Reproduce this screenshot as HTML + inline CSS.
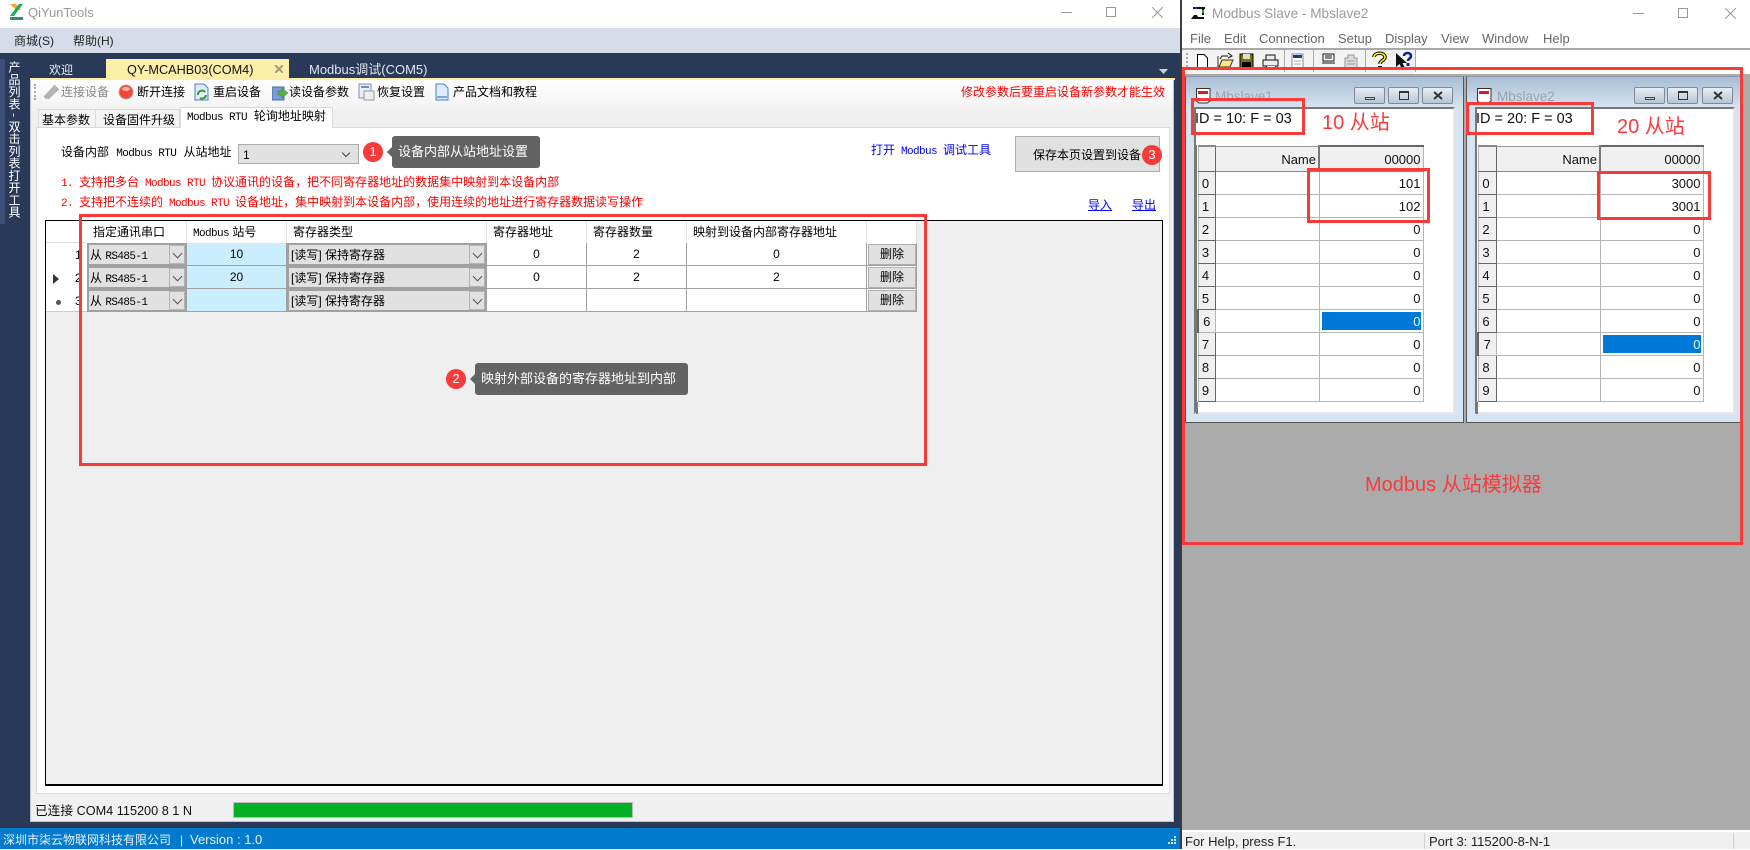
<!DOCTYPE html>
<html><head><meta charset="utf-8"><title>QiYunTools</title>
<style>
html,body{margin:0;padding:0;background:#fff}
body{width:1750px;height:849px;position:relative;overflow:hidden;font-family:"Liberation Sans","Noto Sans CJK SC",sans-serif;font-size:12px;color:#000}
div,span,svg{box-sizing:border-box}
.a{position:absolute}
.t{position:absolute;white-space:nowrap;line-height:16px;font-size:12px}
.s{font-family:"Liberation Mono","WenQuanYi Zen Hei","Noto Sans CJK SC",monospace;word-spacing:-1.2px}
.m{font-family:"Liberation Mono",monospace;font-size:11px;letter-spacing:-.6px;word-spacing:0}
.c{font-family:"Noto Sans CJK SC",sans-serif}
.r{color:#f00}.b{color:#00f}
.red{position:absolute;border:3px solid #f93a3a}
.circ{position:absolute;width:20px;height:20px;border-radius:50%;background:#f93a3a;color:#fff;text-align:center;line-height:20px;font-size:13px}
.tip{position:absolute;background:#636363;color:#fff;border-radius:3px;font-size:13px;white-space:nowrap;font-family:"Liberation Sans","Noto Sans CJK SC",sans-serif}
.tip:before{content:"";position:absolute;left:-5px;top:50%;margin-top:-5px;border:5px solid transparent;border-left:0;border-right-color:#636363}
.chev{position:absolute;background:#e1e1e1;border:1px solid #b4b4b4}
.chev:after{content:"";position:absolute;left:50%;top:50%;width:6px;height:6px;margin:-5px 0 0 -3px;border-right:1px solid #555;border-bottom:1px solid #555;transform:rotate(45deg)}
.hc{position:absolute;top:221px;height:22px;border-right:1px solid #e4e4e4;line-height:22px;padding-left:6px;white-space:nowrap;background:#fff}
.combo{position:absolute;height:23px;background:#e1e1e1;border:1px solid #a0a0a0;outline:1px solid #a0a0a0;outline-offset:-2px;line-height:22px;padding-top:0;white-space:nowrap}
.cell{position:absolute;height:23px;background:#fff;border-right:1px solid #a0a0a0;border-bottom:1px solid #a0a0a0;text-align:center;line-height:23px}
.del{position:absolute;left:868px;width:48px;height:21px;background:#e1e1e1;border:1px solid #b0b0b0;text-align:center;line-height:19px}
.child{position:absolute;top:76px;height:347px;background:#d6e4f1;border:1px solid #555;border-top-color:#8a98a8}
.ctb{position:absolute;left:0;right:0;top:0;height:30px;background:linear-gradient(#a9bdd3,#d6e4f1)}
.cbtn{position:absolute;top:10px;width:31px;height:17px;border:1px solid #7f8b99;border-radius:2px;background:linear-gradient(#e6edf4,#b9c6d4)}
.client{position:absolute;background:#fff;border:2px solid #777;border-right-color:#e6e6e6;border-bottom-color:#e6e6e6}
.mg{position:absolute;border-collapse:collapse;table-layout:fixed;font-size:13px;background:#fff;color:#111}
.mg td,.mg th{height:23px;padding:2px 2px 0 0;border:1px solid #b5b5b5;text-align:right;font-weight:normal;box-sizing:border-box;line-height:20px}
.mg th{background:#f0f0f0;text-align:center;border-right:1px solid #666;border-bottom:1px solid #666}
.mg tr.h td{background:#f0f0f0;border-top:2px solid #666;border-bottom:1px solid #888}
.mg tr.h td.n{border-right:2px solid #777;border-top:1px solid #999}
.mg td.sel{background:#0078d7;color:#dff;box-shadow:inset 0 0 0 2px #fff}
.mg th.cur{border-left:2px solid #666;border-right:none;border-bottom:none;border-top:1px solid #666;padding-left:2px}
</style></head>
<body>

<!-- LEFT WINDOW -->
<div class="a" style="left:0;top:0;width:1180px;height:28px;background:#fff"></div>
<svg class="a" style="left:8px;top:3px" width="18" height="18" viewBox="0 0 18 18"><path d="M2 1H8L13 7H8z" fill="#f5a623"/><path d="M11 1H15L6 13H2z" fill="#26a86a"/><path d="M2 14H15V17H2z" fill="#2b8f78"/></svg>
<div class="t" style="left:28px;top:5px;color:#999;font-size:13px">QiYunTools</div>
<div class="a" style="left:1061px;top:12px;width:11px;height:1px;background:#999"></div>
<div class="a" style="left:1106px;top:7px;width:10px;height:10px;border:1px solid #999"></div>
<svg class="a" style="left:1152px;top:7px" width="11" height="11"><path d="M0 0L11 11M11 0L0 11" stroke="#999" fill="none"/></svg>

<div class="a" style="left:0;top:28px;width:1180px;height:25px;background:#d6dce9"></div>
<div class="t" style="left:14px;top:33px;color:#222;font-size:12px">商城(S)</div>
<div class="t" style="left:73px;top:33px;color:#222;font-size:12px">帮助(H)</div>

<div class="a" style="left:0;top:53px;width:1180px;height:775px;background:#293a58"></div>
<div class="a" style="left:0;top:59px;width:5px;height:165px;background:#3e5078"></div>
<div class="a" style="left:6px;top:61px;width:16px;height:160px;color:#fff;font-size:12px;line-height:16px;letter-spacing:.25px;writing-mode:vertical-rl;white-space:nowrap;font-family:'Noto Sans CJK SC',sans-serif">产品列表 - 双击列表打开工具</div>

<!-- tabs -->
<div class="t" style="left:49px;top:62px;color:#e8edf5;font-size:12px">欢迎</div>
<div class="a" style="left:106px;top:59px;width:183px;height:20px;background:#fdeea8"></div>
<div class="t" style="left:127px;top:62px;color:#111;font-size:12.700px">QY-MCAHB03(COM4)</div>
<svg class="a" style="left:275px;top:65px" width="8" height="8"><path d="M0 0L8 8M8 0L0 8" stroke="#a09a7c" stroke-width="2" fill="none"/></svg>
<div class="t" style="left:309px;top:62px;color:#dfe5ef;font-size:13px">Modbus调试(COM5)</div>
<svg class="a" style="left:1159px;top:69px" width="10" height="5"><path d="M0 0H9L4.500 5z" fill="#ccd3df"/></svg>
<div class="a" style="left:30px;top:78px;width:1145px;height:2px;background:#fdeea8"></div>

<!-- main panel -->
<div class="a" style="left:30px;top:80px;width:1144px;height:742px;background:#f0f0f0;border-left:1px solid #bcc3d0;border-right:1px solid #bcc3d0;border-bottom:1px solid #bcc3d0"></div>
<div class="a" style="left:31px;top:80px;width:1142px;height:48px;background:linear-gradient(#fff 0,#f9f9f9 30%,#efefef 75%,#f0f0f0)"></div>
<!-- toolbar -->
<div class="a" style="left:34px;top:84px;width:2px;height:16px;border-left:2px dotted #aaa"></div>
<svg class="a" style="left:42px;top:83px" width="18" height="18"><path d="M3 15L14 3M5 15L16 5" stroke="#b4b4b4" stroke-width="4" fill="none"/></svg>
<div class="t" style="left:61px;top:84px;color:#888">连接设备</div>
<svg class="a" style="left:118px;top:84px" width="16" height="16"><circle cx="8" cy="8" r="7" fill="#f0483a" stroke="#c8a090"/><ellipse cx="8" cy="5" rx="4" ry="2" fill="#ffb0a0"/></svg>
<div class="t" style="left:137px;top:84px">断开连接</div>
<svg class="a" style="left:194px;top:83px" width="17" height="18"><path d="M1 1H10L14 5V17H1z" fill="#dfeafa" stroke="#4a80c0"/><path d="M4 12A4 4 0 0 1 11 9M12 12A4 4 0 0 1 6 15" stroke="#3a9a3a" stroke-width="2" fill="none"/></svg>
<div class="t" style="left:213px;top:84px">重启设备</div>
<svg class="a" style="left:272px;top:85px" width="16" height="16"><rect x="0" y="2" width="12" height="13" fill="#7a9bd8" stroke="#4a6ab0"/><path d="M6 6H10V3L16 8L10 13V10H6z" fill="#5ab04a" stroke="#3a8a3a" stroke-width=".5"/></svg>
<div class="t" style="left:289px;top:84px">读设备参数</div>
<svg class="a" style="left:358px;top:83px" width="17" height="18"><rect x="1" y="1" width="12" height="14" fill="#e8eef8" stroke="#7f90b0"/><rect x="3" y="3" width="8" height="2" fill="#6a8ac8"/><rect x="6" y="8" width="10" height="9" fill="#eee" stroke="#999"/></svg>
<div class="t" style="left:377px;top:84px">恢复设置</div>
<svg class="a" style="left:435px;top:83px" width="14" height="18"><path d="M1 1H9L13 5V17H1z" fill="#dfeafc" stroke="#4a80c0"/><path d="M2 14H12" stroke="#7aa8e0" stroke-width="2"/></svg>
<div class="t" style="left:453px;top:84px">产品文档和教程</div>
<div class="t r" style="left:961px;top:84px">修改参数后要重启设备新参数才能生效</div>

<!-- page tabs -->
<div class="a" style="left:38px;top:109px;width:58px;height:19px;background:#f3f3f3;border:1px solid #d9d9d9;border-bottom:0"></div>
<div class="a" style="left:96px;top:109px;width:84px;height:19px;background:#f3f3f3;border:1px solid #d9d9d9;border-bottom:0;border-left:0"></div>
<div class="t" style="left:42px;top:112px">基本参数</div>
<div class="t" style="left:103px;top:112px">设备固件升级</div>
<div class="a" style="left:36px;top:127px;width:1134px;height:667px;background:#fff;border:1px solid #d9d9d9"></div>
<div class="a" style="left:180px;top:107px;width:153px;height:21px;background:#fff;border:1px solid #d9d9d9;border-bottom:0"></div>
<div class="t s" style="left:187px;top:109px;word-spacing:-.4px"><span class="m">Modbus RTU</span> 轮询地址映射</div>

<div class="t s" style="left:61px;top:145px;word-spacing:0"><span>设备内部</span> <span class="m">Modbus RTU</span> <span>从站地址</span></div>
<div class="a" style="left:238px;top:144px;width:121px;height:20px;background:#e1e1e1;border:1px solid #adadad;line-height:20px;padding-left:4px">1<span class="a" style="right:9px;top:5px;width:6px;height:6px;border-right:1px solid #444;border-bottom:1px solid #444;transform:rotate(45deg)"></span></div>
<div class="circ" style="left:363px;top:142px">1</div>
<div class="tip" style="left:392px;top:136px;width:148px;height:32px;line-height:31px;padding-left:6px">设备内部从站地址设置</div>

<div class="t s r" style="left:61px;top:174px"><span class="m">1.</span> 支持把多台 <span class="m">Modbus RTU</span> 协议通讯的设备<span class="c">&#xFF0C;</span>把不同寄存器地址的数据集中映射到本设备内部</div>
<div class="t s r" style="left:61px;top:194px"><span class="m">2.</span> 支持把不连续的 <span class="m">Modbus RTU</span> 设备地址<span class="c">&#xFF0C;</span>集中映射到本设备内部<span class="c">&#xFF0C;</span>使用连续的地址进行寄存器数据读写操作</div>

<div class="t s b" style="left:871px;top:143px">打开 <span class="m">Modbus</span> 调试工具</div>
<div class="a" style="left:1015px;top:136px;width:145px;height:36px;background:#e1e1e1;border:1px solid #adadad"></div>
<div class="t" style="left:1033px;top:147px">保存本页设置到设备</div>
<div class="circ" style="left:1142px;top:145px">3</div>
<div class="t b" style="left:1088px;top:197px;text-decoration:underline">导入</div>
<div class="t b" style="left:1132px;top:197px;text-decoration:underline">导出</div>

<!-- data grid -->
<div class="a" style="left:45px;top:220px;width:1118px;height:566px;background:#efefef;border:1px solid #000;border-bottom-width:2px"></div>
<div class="a" style="left:46px;top:221px;width:41px;height:91px;background:#fff;border-bottom:1px solid #ccc"></div>
<div class="a" style="left:46px;top:242px;width:41px;height:1px;background:#ddd"></div>
<div class="t" style="left:75px;top:247px">1</div>
<div class="t" style="left:75px;top:270px">2</div>
<div class="t" style="left:75px;top:293px">3</div>
<svg class="a" style="left:53px;top:274px" width="6" height="10"><path d="M0 0L6 5L0 10z" fill="#333"/></svg>
<div class="a" style="left:56px;top:300px;width:5px;height:5px;border-radius:50%;background:#555"></div>

<div class="hc" style="left:87px;width:100px">指定通讯串口</div>
<div class="hc" style="left:187px;width:100px"><span class="m" style="font-size:11px">Modbus</span> 站号</div>
<div class="hc" style="left:287px;width:200px">寄存器类型</div>
<div class="hc" style="left:487px;width:100px">寄存器地址</div>
<div class="hc" style="left:587px;width:100px">寄存器数量</div>
<div class="hc" style="left:687px;width:180px">映射到设备内部寄存器地址</div>
<div class="hc" style="left:867px;width:50px"></div>
<div class="a" style="left:87px;top:243px;width:830px;height:69px;background:#fff;border-right:1px solid #a0a0a0"></div>

<!-- row 1 -->
<div class="combo" style="left:87px;top:243px;width:100px;padding-left:2px">从 <span class="m">RS485-1</span></div><div class="chev" style="left:169px;top:245px;width:16px;height:19px"></div>
<div class="cell" style="left:187px;top:243px;width:100px;background:#cbeeff">10</div>
<div class="combo" style="left:287px;top:243px;width:200px;padding-left:3px">[读写] 保持寄存器</div><div class="chev" style="left:469px;top:245px;width:16px;height:19px"></div>
<div class="cell" style="left:487px;top:243px;width:100px">0</div>
<div class="cell" style="left:587px;top:243px;width:100px">2</div>
<div class="cell" style="left:687px;top:243px;width:180px">0</div>
<div class="a" style="left:867px;top:243px;width:50px;height:23px;border-bottom:1px solid #a0a0a0"></div>
<div class="del" style="top:244px">删除</div>
<!-- row 2 -->
<div class="combo" style="left:87px;top:266px;width:100px;padding-left:2px">从 <span class="m">RS485-1</span></div><div class="chev" style="left:169px;top:268px;width:16px;height:19px"></div>
<div class="cell" style="left:187px;top:266px;width:100px;background:#cbeeff">20</div>
<div class="combo" style="left:287px;top:266px;width:200px;padding-left:3px">[读写] 保持寄存器</div><div class="chev" style="left:469px;top:268px;width:16px;height:19px"></div>
<div class="cell" style="left:487px;top:266px;width:100px">0</div>
<div class="cell" style="left:587px;top:266px;width:100px">2</div>
<div class="cell" style="left:687px;top:266px;width:180px">2</div>
<div class="a" style="left:867px;top:266px;width:50px;height:23px;border-bottom:1px solid #a0a0a0"></div>
<div class="del" style="top:267px">删除</div>
<!-- row 3 -->
<div class="combo" style="left:87px;top:289px;width:100px;padding-left:2px">从 <span class="m">RS485-1</span></div><div class="chev" style="left:169px;top:291px;width:16px;height:19px"></div>
<div class="cell" style="left:187px;top:289px;width:100px;background:#cbeeff"></div>
<div class="combo" style="left:287px;top:289px;width:200px;padding-left:3px">[读写] 保持寄存器</div><div class="chev" style="left:469px;top:291px;width:16px;height:19px"></div>
<div class="cell" style="left:487px;top:289px;width:100px"></div>
<div class="cell" style="left:587px;top:289px;width:100px"></div>
<div class="cell" style="left:687px;top:289px;width:180px"></div>
<div class="a" style="left:867px;top:289px;width:50px;height:23px;border-bottom:1px solid #a0a0a0"></div>
<div class="del" style="top:290px">删除</div>

<div class="red" style="left:79px;top:214px;width:848px;height:252px"></div>
<div class="circ" style="left:446px;top:369px;">2</div>
<div class="tip" style="left:475px;top:363px;width:213px;height:32px;line-height:31px;padding-left:6px">映射外部设备的寄存器地址到内部</div>

<!-- status -->
<div class="t" style="left:35px;top:803px;color:#111;font-size:12.700px">已连接 COM4 115200 8 1 N</div>
<div class="a" style="left:233px;top:802px;width:400px;height:16px;background:#06b025;border:1px solid #bcbcbc"></div>

<!-- blue bar -->
<div class="a" style="left:0;top:828px;width:1180px;height:21px;background:#007acc"></div>
<div class="t" style="left:3px;top:832px;color:#e8f2fb;font-size:12px">深圳市柒云物联网科技有限公司</div>
<div class="t" style="left:180px;top:832px;color:#e8f2fb">|</div>
<div class="t" style="left:190px;top:832px;color:#e8f2fb;font-size:13px">Version : 1.0</div>
<svg class="a" style="left:1166px;top:836px" width="11" height="11"><g fill="#cfe4f5"><rect x="8" y="0" width="2" height="2"/><rect x="5" y="3" width="2" height="2"/><rect x="8" y="3" width="2" height="2"/><rect x="2" y="6" width="2" height="2"/><rect x="5" y="6" width="2" height="2"/><rect x="8" y="6" width="2" height="2"/></g></svg>

<!-- RIGHT WINDOW -->
<div class="a" style="left:1180px;top:0;width:2px;height:849px;background:#3c3c3c"></div>
<div class="a" style="left:1182px;top:0;width:568px;height:849px;background:#ababab"></div>
<div class="a" style="left:1182px;top:0;width:568px;height:49px;background:#fff;border-bottom:1px solid #a8a8a8"></div>
<svg class="a" style="left:1191px;top:5px" width="15" height="15"><path d="M2 3H5M11 3H14M5 3H11M12 3V10M2 13H13" stroke="#111" stroke-width="2" fill="none"/><rect x="4" y="2" width="2" height="2" fill="#1a3ad0"/><rect x="11" y="5" width="2" height="3" fill="#10a030"/><path d="M0 14L3 10H6L8 14z" fill="#111"/></svg>
<div class="t" style="left:1212px;top:6px;color:#9a9a9a;font-size:13.600px">Modbus Slave - Mbslave2</div>
<div class="a" style="left:1633px;top:13px;width:11px;height:1px;background:#999"></div>
<div class="a" style="left:1678px;top:8px;width:10px;height:10px;border:1px solid #999"></div>
<svg class="a" style="left:1725px;top:8px" width="11" height="11"><path d="M0 0L11 11M11 0L0 11" stroke="#999" fill="none"/></svg>

<div class="t" style="left:1190px;top:31px;color:#666;font-size:13px">File</div>
<div class="t" style="left:1224px;top:31px;color:#666;font-size:13px">Edit</div>
<div class="t" style="left:1259px;top:31px;color:#666;font-size:13px">Connection</div>
<div class="t" style="left:1338px;top:31px;color:#666;font-size:13px">Setup</div>
<div class="t" style="left:1385px;top:31px;color:#666;font-size:13px">Display</div>
<div class="t" style="left:1441px;top:31px;color:#666;font-size:13px">View</div>
<div class="t" style="left:1482px;top:31px;color:#666;font-size:13px">Window</div>
<div class="t" style="left:1543px;top:31px;color:#666;font-size:13px">Help</div>

<div class="a" style="left:1182px;top:50px;width:568px;height:24px;background:#fff"></div>
<div class="a" style="left:1182px;top:50px;width:233px;height:24px;background:#f3f3f3"></div>
<div class="a" style="left:1186px;top:53px;width:2px;height:14px;border-left:2px dotted #aaa"></div>
<svg class="a" style="left:1182px;top:50px" width="236" height="22" viewBox="0 0 236 22">
<path d="M15.500 4.500H22L25.500 8V18.500H15.500z" fill="#fff" stroke="#000"/>
<path d="M36 6V17H48L51 10H40L37 17" fill="#ffe680" stroke="#333"/><path d="M38 9L40 6H46M46 3L50 6L46 8" fill="none" stroke="#111"/>
<rect x="58" y="4" width="13" height="14" fill="#807000" stroke="#000"/><rect x="61" y="4" width="7" height="5" fill="#ddd"/><rect x="60" y="12" width="9" height="6" fill="#000"/>
<path d="M84 5H93V10H84zM81 10H96V16H81z" fill="#eee" stroke="#111"/><path d="M85 16L83 19H92L94 16" fill="#fff" stroke="#111"/>
<rect x="102" y="0" width="1" height="22" fill="#aaa"/>
<rect x="110" y="4" width="11" height="15" fill="#fff" stroke="#888"/><rect x="111" y="5" width="9" height="3" fill="#1a3a90"/><path d="M112 11H119M112 14H119" stroke="#aaa"/>
<rect x="131" y="0" width="1" height="22" fill="#aaa"/>
<rect x="141" y="4" width="11" height="7" fill="#fff" stroke="#111"/><path d="M143 6H150M143 8H150M140 13H153" stroke="#111"/>
<path d="M166 5H172V8H175V18H163V8H166z" fill="#ddd" stroke="#999"/><path d="M165 11H173M165 14H173" stroke="#999"/>
<rect x="183" y="0" width="1" height="22" fill="#aaa"/>
<path d="M192 7C192 2 203 2 203 7C203 11 198 10 198 14" fill="none" stroke="#000" stroke-width="3.500"/><path d="M192 7C192 2 203 2 203 7C203 11 198 10 198 14" fill="none" stroke="#ff0" stroke-width="1.500"/><rect x="196" y="16" width="4" height="3" fill="#000"/>
<path d="M214 3V17L217.500 14L220 19L223 18L220.500 13H225z" fill="#111"/>
<path d="M222 6C222 2 229 2 229 6C229 9 226 8 226 11" fill="none" stroke="#102090" stroke-width="2.500"/><rect x="224.500" y="13" width="3" height="3" fill="#102090"/>
<rect x="233" y="0" width="1" height="22" fill="#aaa"/>
</svg>

<!-- child 1 -->
<div class="child" style="left:1185px;width:279px">
  <div class="ctb"></div>
  <svg class="a" style="left:10px;top:11px" width="15" height="17"><path d="M.5 .5H14V13L11 15H3L.5 13z" fill="#fff" stroke="#333"/><rect x="2" y="3" width="10" height="3" fill="#d02020"/></svg>
  <div class="t" style="left:29px;top:12px;color:#9aa3ad;font-size:13.500px">Mbslave1</div>
  <div class="cbtn" style="left:168px"><span class="a" style="left:10px;top:9px;width:10px;height:3px;border:1px solid #444"></span></div>
  <div class="cbtn" style="left:202px"><span class="a" style="left:10px;top:3px;width:10px;height:9px;border:1px solid #333;border-top-width:2px"></span></div>
  <div class="cbtn" style="left:236px"><svg class="a" style="left:10px;top:3px" width="10" height="9"><path d="M1 1L9 8M9 1L1 8" stroke="#333" stroke-width="2"/></svg></div>
  <div class="client" style="left:8px;top:30px;width:261px;height:307px"></div>
  <div class="t" style="left:9px;top:33px;font-size:14.500px;line-height:18px;color:#111">ID = 10: F = 03</div>
  <div class="a" style="left:10px;top:68px;width:2px;height:269px;background:#777"></div>
  <table class="mg" style="left:11px;top:68px;width:225px">
   <colgroup><col style="width:17px"><col style="width:104px"><col style="width:104px"></colgroup>
   <tr class="h"><th style="height:25px;border-top:2px solid #888"></th><td class="n" style="height:25px">Name</td><td style="height:25px">00000</td></tr>
   <tr><th>0</th><td></td><td>101</td></tr><tr><th>1</th><td></td><td>102</td></tr><tr><th>2</th><td></td><td>0</td></tr><tr><th>3</th><td></td><td>0</td></tr><tr><th>4</th><td></td><td>0</td></tr><tr><th>5</th><td></td><td>0</td></tr>
   <tr><th class="cur">6</th><td></td><td class="sel">0</td></tr>
   <tr><th>7</th><td></td><td>0</td></tr><tr><th>8</th><td></td><td>0</td></tr><tr><th>9</th><td></td><td>0</td></tr>
  </table>
</div>
<!-- child 2 -->
<div class="child" style="left:1466px;width:277px">
  <div class="ctb"></div>
  <svg class="a" style="left:10px;top:11px" width="15" height="17"><path d="M.5 .5H14V13L11 15H3L.5 13z" fill="#fff" stroke="#333"/><rect x="2" y="3" width="10" height="3" fill="#d02020"/></svg>
  <div class="t" style="left:30px;top:12px;color:#9aa3ad;font-size:13.500px">Mbslave2</div>
  <div class="cbtn" style="left:167px"><span class="a" style="left:10px;top:9px;width:10px;height:3px;border:1px solid #444"></span></div>
  <div class="cbtn" style="left:200px"><span class="a" style="left:10px;top:3px;width:10px;height:9px;border:1px solid #333;border-top-width:2px"></span></div>
  <div class="cbtn" style="left:235px"><svg class="a" style="left:10px;top:3px" width="10" height="9"><path d="M1 1L9 8M9 1L1 8" stroke="#333" stroke-width="2"/></svg></div>
  <div class="client" style="left:8px;top:30px;width:260px;height:307px"></div>
  <div class="t" style="left:9px;top:33px;font-size:14.500px;line-height:18px;color:#111">ID = 20: F = 03</div>
  <div class="a" style="left:9px;top:68px;width:2px;height:269px;background:#777"></div>
  <table class="mg" style="left:10px;top:68px;width:225px">
   <colgroup><col style="width:18px"><col style="width:104px"><col style="width:103px"></colgroup>
   <tr class="h"><th style="height:25px;border-top:2px solid #888"></th><td class="n" style="height:25px">Name</td><td style="height:25px">00000</td></tr>
   <tr><th>0</th><td></td><td>3000</td></tr><tr><th>1</th><td></td><td>3001</td></tr><tr><th>2</th><td></td><td>0</td></tr><tr><th>3</th><td></td><td>0</td></tr><tr><th>4</th><td></td><td>0</td></tr><tr><th>5</th><td></td><td>0</td></tr><tr><th>6</th><td></td><td>0</td></tr>
   <tr><th class="cur">7</th><td></td><td class="sel">0</td></tr>
   <tr><th>8</th><td></td><td>0</td></tr><tr><th>9</th><td></td><td>0</td></tr>
  </table>
</div>

<!-- red annotation -->
<div class="red" style="left:1182px;top:67px;width:561px;height:478px"></div>
<div class="red" style="left:1191px;top:98px;width:114px;height:37px"></div>
<div class="red" style="left:1466px;top:102px;width:128px;height:33px"></div>
<div class="red" style="left:1307px;top:168px;width:123px;height:55px"></div>
<div class="red" style="left:1597px;top:171px;width:114px;height:49px"></div>
<div class="t" style="left:1322px;top:111px;color:#f93a3a;font-size:20px;line-height:24px">10 从站</div>
<div class="t" style="left:1617px;top:115px;color:#f93a3a;font-size:20px;line-height:24px">20 从站</div>
<div class="t" style="left:1365px;top:473px;color:#f93a3a;font-size:20px;line-height:24px">Modbus 从站模拟器</div>

<!-- right status bar -->
<div class="a" style="left:1182px;top:830px;width:568px;height:2px;background:#fff"></div>
<div class="a" style="left:1182px;top:832px;width:568px;height:17px;background:#f0f0f0"></div>
<div class="a" style="left:1424px;top:833px;width:1px;height:16px;background:#d0d0d0"></div>
<div class="a" style="left:1733px;top:833px;width:1px;height:16px;background:#d0d0d0"></div>
<div class="t" style="left:1185px;top:834px;font-size:13px;color:#222">For Help, press F1.</div>
<div class="t" style="left:1429px;top:834px;font-size:13px;color:#222">Port 3: 115200-8-N-1</div>
</body></html>
